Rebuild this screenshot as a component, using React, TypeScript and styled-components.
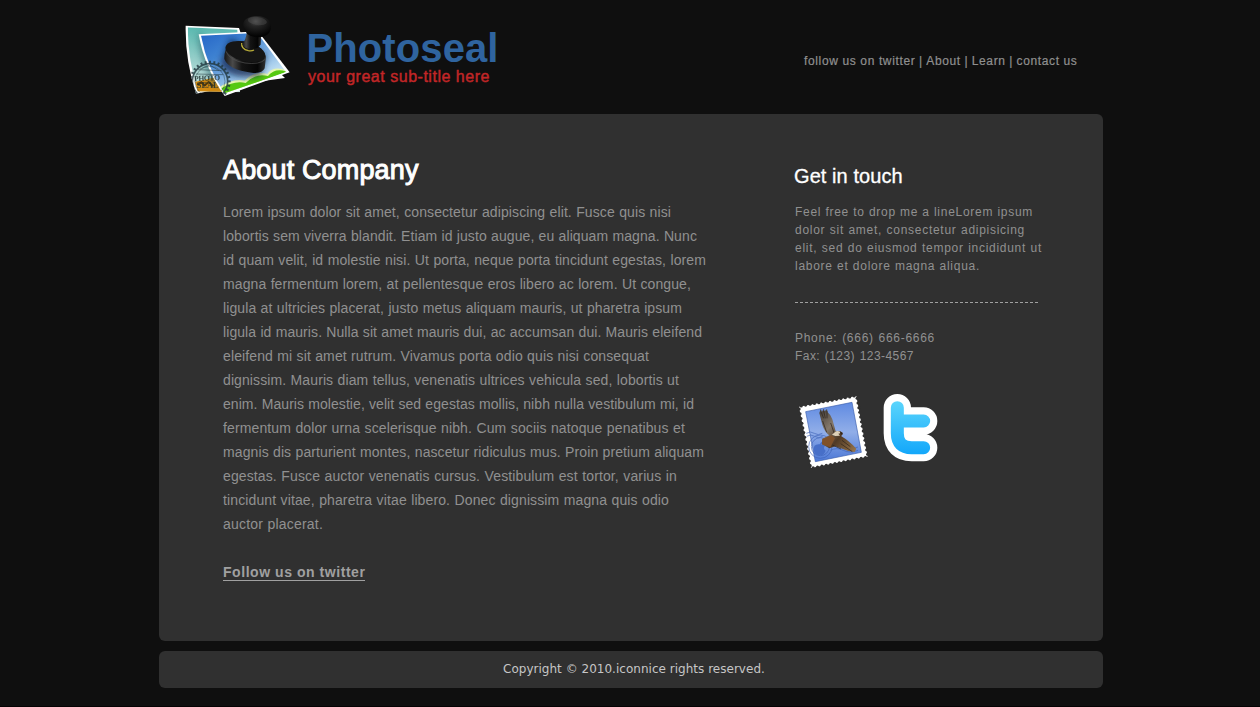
import React from 'react';
import styled, { createGlobalStyle } from 'styled-components';

const GlobalStyle = createGlobalStyle`
  html, body { margin: 0; padding: 0; background: #0f0f0f; overflow: hidden; }
  * { box-sizing: border-box; }
  h1, h2, p { margin: 0; }
  a { color: inherit; }
`;

const Page = styled.div`
  width: 1260px;
  height: 707px;
  padding-left: 159px;
  background: #0f0f0f;
  border-bottom: 1px solid #050203;
  font-family: 'Liberation Sans', Arial, sans-serif;
  overflow: hidden;
`;

const Shell = styled.div`
  width: 944px;
  display: flex;
  flex-direction: column;
`;

const Header = styled.header`
  height: 114px;
  display: flex;
  align-items: flex-start;
  padding: 5px 0 0 11px;
`;

const Brand = styled.div`
  padding: 23px 0 0 1.5px;
`;

const BrandName = styled.div`
  color: #2f649f;
  font-size: 40px;
  line-height: 40px;
  font-weight: bold;
  letter-spacing: 0.1px;
  white-space: nowrap;
`;

const Tagline = styled.div`
  padding-left: 1.5px;
  color: #c22627;
  font-size: 16px;
  line-height: 17px;
  letter-spacing: 0.52px;
  white-space: nowrap;
  -webkit-text-stroke: 0.45px #c22627;
`;

const Nav = styled.nav`
  display: flex;
  gap: 3.6px;
  margin: 48px 25.5px 0 auto;
  color: #8f8f8f;
  font-size: 12px;
  line-height: 16px;
  letter-spacing: 0.63px;
  white-space: nowrap;
  -webkit-text-stroke: 0.2px #8f8f8f;
  a { text-decoration: none; }
`;

const Panel = styled.main`
  display: flex;
  height: 527px;
  border-radius: 6px;
  background: #303030;
  padding-left: 64px;
`;

const Article = styled.section`
  width: 571px;
  padding-top: 39px;
`;

const Title = styled.h1`
  color: #fff;
  font-size: 27px;
  line-height: 34px;
  font-weight: normal;
  letter-spacing: 0.15px;
  white-space: nowrap;
  -webkit-text-stroke: 1px #fff;
`;

const Copy = styled.div<{ $size: number; $leading: number }>`
  color: #909090;
  font-size: ${p => p.$size}px;
  line-height: ${p => p.$leading}px;
`;

const ArticleCopy = styled(Copy)`
  margin-top: 13px;
`;

const Line = styled.div<{ $width: number; $tracking: number }>`
  width: ${p => p.$width}px;
  letter-spacing: ${p => p.$tracking}px;
  white-space: nowrap;
  text-align: justify;
  text-align-last: justify;
`;

const FollowLink = styled.a`
  display: inline-block;
  margin-top: 28px;
  height: 17px;
  color: #a0a0a0;
  border-bottom: 1px solid #a0a0a0;
  font-size: 14px;
  line-height: 16px;
  font-weight: bold;
  letter-spacing: 0.55px;
  text-decoration: none;
  white-space: nowrap;
`;

const Aside = styled.aside`
  width: 260px;
  padding-top: 49px;
`;

const AsideTitle = styled.h2`
  color: #fff;
  font-size: 20px;
  line-height: 26px;
  font-weight: normal;
  letter-spacing: 0.07px;
  -webkit-text-stroke: 0.3px #fff;
`;

const AsideCopy = styled(Copy)`
  margin: 14px 0 0 1px;
`;

const PhoneCopy = styled(Copy)`
  margin-left: 1px;
`;

const Divider = styled.div`
  width: 243px;
  height: 1px;
  margin: 27px 0 26px 1px;
  background: repeating-linear-gradient(90deg, #a0a0a0 0 3px, transparent 3px 5px);
`;

const SocialIcons = styled.div`
  margin: 20px 0 0 -9px;
  height: 90px;
`;

const Footer = styled.footer`
  height: 37px;
  margin-top: 10px;
  border-radius: 6px;
  background: #303030;
  color: #c6c6c6;
  font-family: 'DejaVu Sans', Verdana, sans-serif;
  font-size: 12px;
  line-height: 36px;
  padding-left: 344px;
  letter-spacing: 0.02px;
  white-space: nowrap;
`;

type TextLine = [text: string, width: number, tracking: number];

const articleLines: TextLine[] = [
  ['Lorem ipsum dolor sit amet, consectetur adipiscing elit. Fusce quis nisi', 448, 0.1],
  ['lobortis sem viverra blandit. Etiam id justo augue, eu aliquam magna. Nunc', 474, 0.1],
  ['id quam velit, id molestie nisi. Ut porta, neque porta tincidunt egestas, lorem', 483, 0.1],
  ['magna fermentum lorem, at pellentesque eros libero ac lorem. Ut congue,', 468, 0.1],
  ['ligula at ultricies placerat, justo metus aliquam mauris, ut pharetra ipsum', 459, 0.1],
  ['ligula id mauris. Nulla sit amet mauris dui, ac accumsan dui. Mauris eleifend', 479, 0.08],
  ['eleifend mi sit amet rutrum. Vivamus porta odio quis nisi consequat', 426, 0.12],
  ['dignissim. Mauris diam tellus, venenatis ultrices vehicula sed, lobortis ut', 456, 0.1],
  ['enim. Mauris molestie, velit sed egestas mollis, nibh nulla vestibulum mi, id', 471, 0.06],
  ['fermentum dolor urna scelerisque nibh. Cum sociis natoque penatibus et', 462, 0.12],
  ['magnis dis parturient montes, nascetur ridiculus mus. Proin pretium aliquam', 481, 0.1],
  ['egestas. Fusce auctor venenatis cursus. Vestibulum est tortor, varius in', 454, 0.12],
  ['tincidunt vitae, pharetra vitae libero. Donec dignissim magna quis odio', 446, 0.12],
  ['auctor placerat.', 100, 0.2],
];

const contactLines: TextLine[] = [
  ['Feel free to drop me a lineLorem ipsum', 238, 0.72],
  ['dolor sit amet, consectetur adipisicing', 230, 0.72],
  ['elit, sed do eiusmod tempor incididunt ut', 247, 0.72],
  ['labore et dolore magna aliqua.', 185, 0.72],
];

const phoneLines: TextLine[] = [
  ['Phone: (666) 666-6666', 140, 0.72],
  ['Fax: (123) 123-4567', 119, 0.45],
];

const Lines = ({ items }: { items: TextLine[] }) => (
  <>
    {items.map(([text, width, tracking]) => (
      <Line key={text} $width={width} $tracking={tracking}>{text}</Line>
    ))}
  </>
);

const teeth = Array.from({ length: 28 }, (_, i) => (i * 360) / 28);

const Logo = () => (
  <svg width="135" height="105" viewBox="0 0 405 315">
    <defs>
      <linearGradient id="teal" x1="0" y1="0" x2="0" y2="1">
        <stop offset="0" stopColor="#4fb5ab" />
        <stop offset="0.6" stopColor="#a2d3cf" />
        <stop offset="1" stopColor="#cfe3df" />
      </linearGradient>
      <linearGradient id="sky" x1="0" y1="0" x2="0.8" y2="1">
        <stop offset="0" stopColor="#1f5fc4" />
        <stop offset="0.35" stopColor="#3f83d2" />
        <stop offset="0.75" stopColor="#b6d8f0" />
        <stop offset="1" stopColor="#eaf5fb" />
      </linearGradient>
      <linearGradient id="side" x1="0" y1="0" x2="1" y2="0">
        <stop offset="0" stopColor="#161616" />
        <stop offset="0.2" stopColor="#4a4a4a" />
        <stop offset="0.42" stopColor="#141414" />
        <stop offset="0.8" stopColor="#050505" />
        <stop offset="1" stopColor="#333" />
      </linearGradient>
      <radialGradient id="knob" cx="0.45" cy="0.25" r="0.7">
        <stop offset="0" stopColor="#505050" />
        <stop offset="0.35" stopColor="#252525" />
        <stop offset="1" stopColor="#030303" />
      </radialGradient>
      <filter id="soft" x="-30%" y="-30%" width="160%" height="160%">
        <feGaussianBlur stdDeviation="9" />
      </filter>
      <clipPath id="photo">
        <path d="M93 92 L262 84 L348 201 L164 265 Q112 190 93 92Z" />
      </clipPath>
      <clipPath id="back">
        <path d="M53 67 L202 74 L210 262 L83 259 Q54 165 53 67Z" />
      </clipPath>
      <clipPath id="paper">
        <path d="M47 62 L207 69 L359 202 L164 273 L150 252 L78 266 Q45 165 47 62Z" />
      </clipPath>
    </defs>
    <path d="M47 62 L207 69 L214 90 L345 219 L250 232 L78 266 Q45 165 47 62Z" fill="#fff" />
    <g clipPath="url(#back)">
      <path d="M40 50H230V270H40Z" fill="url(#teal)" />
      <path d="M70 232 L130 218 L165 270 H75Z" fill="#d38b12" />
      <path d="M82 240l12-8 10 9 12-10 14 13" fill="none" stroke="#593b08" strokeWidth="6" />
      <path d="M84 88 L92 83 L150 245 L130 240 Q90 170 84 88Z" fill="#17505a" opacity=".55" filter="url(#soft)" />
    </g>
    <path d="M86 88 L264 79 L359 202 L164 273 Q104 190 86 88Z" fill="#fff" />
    <g clipPath="url(#photo)">
      <path d="M80 70H360V280H80Z" fill="url(#sky)" />
      <path d="M145 249 Q190 218 224 227 Q255 195 292 207 Q311 180 355 198 L290 223 L162 270Z" fill="#e6f7b0" />
      <path d="M149 253 Q192 225 227 234 Q257 203 294 213 Q315 187 350 200 L292 222 L162 268Z" fill="#55c910" />
      <path d="M149 178 Q180 228 272 214 L290 150 L180 100Z" fill="#071d42" opacity=".7" filter="url(#soft)" />
    </g>
    <g clipPath="url(#paper)">
      <g fill="none" stroke="#20363d" opacity=".8">
        <circle cx="120" cy="229" r="53" strokeWidth="5" />
        <circle cx="120" cy="229" r="45" strokeWidth="1.5" />
        {teeth.map(a => (
          <path key={a} d="M120 176v-9" strokeWidth="6" transform={`rotate(${a} 120 229)`} />
        ))}
        <path d="M84 194l71 3M90 192l29-12 28 17M78 207l82 2" strokeWidth="2" />
      </g>
    </g>
    <g fill="#20302f" fontFamily="Liberation Serif, serif" fontWeight="bold" opacity=".85">
      <text x="72" y="227" fontSize="23" textLength="78" transform="rotate(-3 110 220)">PHOTO</text>
      <text x="80" y="250" fontSize="25" textLength="66">SEAL</text>
    </g>
    <path d="M163 157 Q164 111 211 109 Q274 111 288 155 L284 190 Q276 207 245 203 Q176 195 163 162Z" fill="url(#side)" />
    <ellipse cx="226" cy="140" rx="61" ry="29" transform="rotate(14 226 140)" fill="#151515" />
    <path d="M168 139 Q178 166 225 174 Q268 180 286 163" fill="none" stroke="#555" strokeWidth="2" />
    <path d="M215 114 Q213 132 235 137 Q245 139 252 135" fill="none" stroke="#b9ad39" strokeWidth="4" />
    <path d="M231 78 Q228 105 217 117 Q221 132 244 132 Q262 133 272 119 L274 82Z" fill="url(#side)" />
    <path d="M220 62 Q218 35 261 33 Q305 36 303 67 Q300 97 264 97 Q224 95 220 62Z" fill="url(#knob)" />
    <ellipse cx="262" cy="48" rx="29" ry="12" transform="rotate(8 262 48)" fill="#555" opacity=".4" />
  </svg>
);

const perforation = Array.from({ length: 13 }, (_, i) => i);

const Social = () => (
  <svg width="165" height="90" viewBox="0 0 495 270">
    <defs>
      <linearGradient id="stamp" x1="0" y1="0" x2="0" y2="1">
        <stop offset="0" stopColor="#5f8ae2" />
        <stop offset="0.5" stopColor="#91aee8" />
        <stop offset="1" stopColor="#4c78d6" />
      </linearGradient>
      <linearGradient id="bird" gradientUnits="userSpaceOnUse" x1="0" y1="48" x2="0" y2="208">
        <stop offset="0" stopColor="#5bd5fc" />
        <stop offset="1" stopColor="#13a7fa" />
      </linearGradient>
      <linearGradient id="wing" x1="0" y1="0" x2="1" y2="1">
        <stop offset="0" stopColor="#3b3530" />
        <stop offset="0.35" stopColor="#85796b" />
        <stop offset="0.6" stopColor="#503a25" />
        <stop offset="1" stopColor="#9b784d" />
      </linearGradient>
    </defs>
    <path d="M42 65 L214 33 L248 215 L78 249Z" fill="#fff" />
    <g fill="#303030">
      {perforation.map(i => {
        const t = (i + 0.5) / 13;
        return (
          <React.Fragment key={i}>
            <circle cx={42 + 172 * t} cy={64 - 32 * t} r="4.6" />
            <circle cx={78 + 170 * t} cy={250 - 34 * t} r="4.6" />
            <circle cx={41 + 36 * t} cy={65 + 184 * t} r="4.6" />
            <circle cx={215 + 34 * t} cy={33 + 182 * t} r="4.6" />
          </React.Fragment>
        );
      })}
    </g>
    <path d="M62 80 L201 52 L229 202 L91 230Z" fill="url(#stamp)" stroke="#3c5fae" strokeWidth="2" />
    <g fill="none" stroke="#3d62b6" strokeWidth="2.5" opacity=".75">
      <circle cx="106" cy="185" r="35" />
      <circle cx="106" cy="185" r="27" />
      <path d="M64 145q12-8 24 0t24 0M65 154q12-8 24 0t24 0M137 186q18-10 38 0t44 0M137 196q18-10 38 0t44 0" />
    </g>
    <path d="M104 178q7-11 10-9 1 7-8 11 12-6 14 2-7 7 2 15-8 18-18 12-13 5-18-13-2-20 18-18Z" fill="#476fc8" />
    <path d="M103 84 L107 72 L111 80 L116 71 L119 79 L126 72 L128 82 Q138 90 142 103 L152 139 L167 139 L173 145 L169 154 Q190 166 214 191 L209 201 L190 198 L151 184 L133 190 L111 178 L112 161 L133 151 Q119 141 112 119Z" fill="url(#wing)" />
    <path d="M109 82l7 18m0-22l5 22m5-22l0 22m-13 8l12 34m12-28l13 38m21 14l25 19m-29-9l35 24m-60-20l26 12" stroke="#2d241c" strokeWidth="3" fill="none" opacity=".7" />
    <path d="M112 162 L139 151 L150 160 L136 187 L111 178Z" fill="#805129" />
    <path d="M151 140q9-6 17 4l-8 2 5 6-14 1-10-4Z" fill="#ddd0b8" />
    <path d="M165 140l8 3-1 7-6-5Z" fill="#342517" />
    <g fill="none" strokeLinecap="round" strokeLinejoin="round">
      <path d="M337 68V145Q337 188 380 188H416M337 108H416" stroke="#fff" strokeWidth="82" />
      <path d="M337 68V145Q337 188 380 188H416M337 108H416" stroke="url(#bird)" strokeWidth="39" />
    </g>
  </svg>
);

export default function App() {
  return (
    <>
      <GlobalStyle />
      <Page>
        <Shell>
          <Header>
            <Logo />
            <Brand>
              <BrandName>Photoseal</BrandName>
              <Tagline>your great sub-title here</Tagline>
            </Brand>
            <Nav>
              <a>follow us on twitter</a><span>|</span>
              <a>About</a><span>|</span>
              <a>Learn</a><span>|</span>
              <a>contact us</a>
            </Nav>
          </Header>
          <Panel>
            <Article>
              <Title>About Company</Title>
              <ArticleCopy $size={14} $leading={24}>
                <Lines items={articleLines} />
              </ArticleCopy>
              <FollowLink>Follow us on twitter</FollowLink>
            </Article>
            <Aside>
              <AsideTitle>Get in touch</AsideTitle>
              <AsideCopy $size={12} $leading={18}>
                <Lines items={contactLines} />
              </AsideCopy>
              <Divider />
              <PhoneCopy $size={12} $leading={18}>
                <Lines items={phoneLines} />
              </PhoneCopy>
              <SocialIcons><Social /></SocialIcons>
            </Aside>
          </Panel>
          <Footer>Copyright © 2010.iconnice rights reserved.</Footer>
        </Shell>
      </Page>
    </>
  );
}
